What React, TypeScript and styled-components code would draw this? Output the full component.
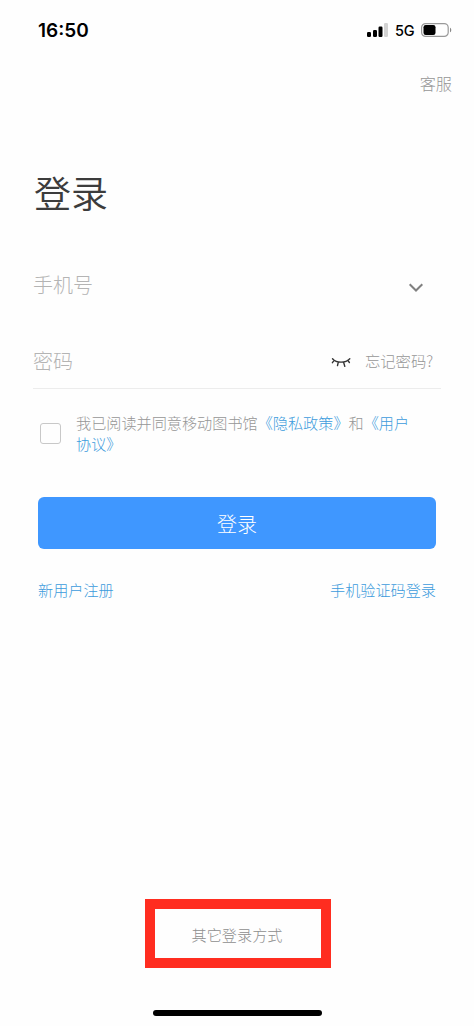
import React from "react";
import styled, { createGlobalStyle } from "styled-components";

const GlobalStyle = createGlobalStyle`
  * { box-sizing: border-box; }
  body { margin: 0; background: #fefefe; }
`;

const Screen = styled.main`
  width: 474px;
  height: 1026px;
  overflow: hidden;
  display: flex;
  flex-direction: column;
  background: #fefefe;
  font-family: "Noto Sans CJK SC", sans-serif;
  font-weight: 300;
  font-size: 15.15px;
  line-height: 21px;
  color: #969696;
  white-space: nowrap;
`;

const StatusBar = styled.header`
  height: 60px;
  padding: 0 22px 0 38px;
  display: flex;
  align-items: center;
  justify-content: space-between;
  color: #000;
  font-family: Inter, sans-serif;
`;

const Clock = styled.time`
  font-size: 19px;
  font-weight: 600;
`;

const StatusIcons = styled.div`
  display: flex;
  align-items: center;
`;

const Network = styled.span`
  margin: 1px 6px 0 7px;
  width: 20px;
  font-size: 14.5px;
  font-weight: 500;
  letter-spacing: -0.2px;
`;

const TopBar = styled.nav`
  height: 46px;
  padding: 0 22px;
  display: flex;
  align-items: center;
  justify-content: flex-end;
  font-size: 16.2px;
`;

const Title = styled.h1`
  margin: 58px 0 0 34px;
  height: 56px;
  line-height: 56px;
  font-size: 37px;
  font-weight: 350;
  color: #3c3c3c;
`;

const Field = styled.div<{ $top: number; $lined?: boolean }>`
  height: 54px;
  margin: ${(p) => p.$top}px 33px 0;
  padding: 0 7px 1px 0;
  display: flex;
  align-items: center;
  border-bottom: 1px solid ${(p) => (p.$lined ? "#ececec" : "transparent")};
`;

const Placeholder = styled.span`
  flex: 1;
  font-size: 20px;
  line-height: 28px;
  color: #b4b4b4;
`;

const IconSlot = styled.span`
  display: flex;
  padding: 3px 10px 0 0;
`;

const Forgot = styled.span`
  width: 69px;
  margin-left: 14px;
  padding-bottom: 2px;
  font-size: 15.3px;
`;

const Agreement = styled.div`
  margin: 23px 33px 0 40px;
  display: flex;
  align-items: center;
`;

const Checkbox = styled.span`
  width: 21px;
  height: 21px;
  margin-right: 15px;
  border: 1px solid #c8c8c8;
  border-radius: 3px;
`;

const Link = styled.span`
  color: #3c9bdc;
`;

const LoginButton = styled.button`
  height: 52px;
  margin: 43px 38px 0;
  padding: 0;
  border: 0;
  border-radius: 6px;
  background: #3f97ff;
  color: #fff;
  font: inherit;
  font-size: 20px;
`;

const Links = styled.div`
  margin: 30px 38px 0;
  display: flex;
  justify-content: space-between;
`;

const OtherMethods = styled.div`
  width: 186px;
  height: 69px;
  margin: auto auto 42px 145px;
  padding: 2px 2px 0 0;
  border: 10px solid #ff2d20;
  display: flex;
  align-items: center;
  justify-content: center;
  color: #8e8e8e;
`;

const HomeIndicator = styled.div`
  width: 169px;
  height: 6px;
  margin: 0 0 10px 153px;
  border-radius: 3px;
  background: #000;
  flex-shrink: 0;
`;

const Signal = () => (
  <svg width="21" height="14" viewBox="0 0 21 14">
    <rect x="0" y="9" width="4" height="5" rx="1.2" />
    <rect x="6" y="7" width="4" height="7" rx="1.2" />
    <rect x="11.5" y="3.5" width="4" height="10.5" rx="1.2" />
    <rect x="17" y="0" width="4" height="14" rx="1.2" fill="#d2d2d2" />
  </svg>
);

const Battery = () => (
  <svg width="31" height="14" viewBox="0 0 31 14">
    <rect x="0.6" y="0.6" width="26.6" height="12.8" rx="4" fill="none" stroke="#999" strokeWidth="1.2" />
    <rect x="2.5" y="2" width="12" height="10" rx="2.2" />
    <path d="M29 4.7c1.7.6 1.7 4 0 4.6z" fill="#888" />
  </svg>
);

const Chevron = () => (
  <svg width="16" height="12" viewBox="0 0 16 12">
    <path d="M1.7 3.2 8 9.5l6.3-6.3" fill="none" stroke="#808080" strokeWidth="2" />
  </svg>
);

const ClosedEye = () => (
  <svg width="20" height="16" viewBox="0 0 20 16" fill="none" stroke="#333" strokeWidth="1.4" strokeLinecap="round">
    <path d="M1.5 5.7C5.5 10.3 14.5 10.3 18.8 5.7M3.2 7.3 1.4 9.7M7.3 9.2l-.8 3.4M12.6 9.2l1.2 4.2M16.8 7.3l1.6 2.2" />
  </svg>
);

export default function App() {
  return (
    <Screen>
      <GlobalStyle />
      <StatusBar>
        <Clock>16:50</Clock>
        <StatusIcons>
          <Signal />
          <Network>5G</Network>
          <Battery />
        </StatusIcons>
      </StatusBar>
      <TopBar>客服</TopBar>
      <Title>登录</Title>
      <Field $top={39}>
        <Placeholder>手机号</Placeholder>
        <IconSlot>
          <Chevron />
        </IconSlot>
      </Field>
      <Field $top={22} $lined>
        <Placeholder>密码</Placeholder>
        <ClosedEye />
        <Forgot>忘记密码?</Forgot>
      </Field>
      <Agreement>
        <Checkbox />
        <div>
          我已阅读并同意移动图书馆<Link>《隐私政策》</Link>和<Link>《用户</Link>
          <br />
          <Link>协议》</Link>
        </div>
      </Agreement>
      <LoginButton>登录</LoginButton>
      <Links>
        <Link>新用户注册</Link>
        <Link>手机验证码登录</Link>
      </Links>
      <OtherMethods>其它登录方式</OtherMethods>
      <HomeIndicator />
    </Screen>
  );
}
